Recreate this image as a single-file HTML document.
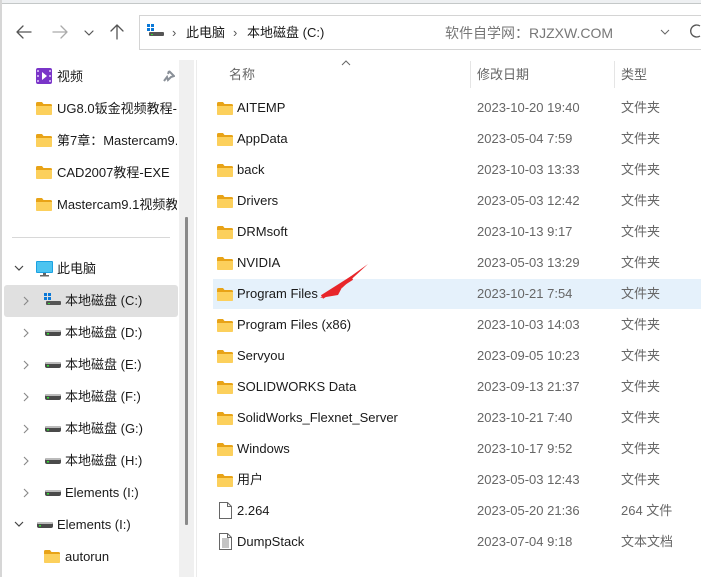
<!DOCTYPE html>
<html><head><meta charset="utf-8">
<style>
*{margin:0;padding:0;box-sizing:border-box}
body{width:701px;height:577px;overflow:hidden;background:#fff;position:relative;font-family:"Liberation Sans","Noto Sans CJK SC",sans-serif;font-size:13px;color:#1a1a1a}
.a{position:absolute;white-space:nowrap}
.fold{position:absolute;width:16px;height:13px}
.t{line-height:16px;margin-top:1px}
.g{color:#666}
</style></head><body>
<div class="a" style="left:0;top:0;width:701px;height:4px;background:#eef0f2;border-bottom:1px solid #c4c8c8"></div>
<div class="a" style="left:0;top:0;width:2px;height:577px;background:#d6d6d6"></div>
<svg class="a" style="left:14px;top:22px" width="120" height="20" viewBox="0 0 120 20" fill="none" stroke-linecap="round" stroke-linejoin="round">
<path d="M3 10H17M3 10L9 4M3 10L9 16" stroke="#555" stroke-width="1.3"/>
<path d="M39 10H53M53 10L47 4M53 10L47 16" stroke="#aaa" stroke-width="1.3"/>
<path d="M71 9L75 13L79 9" stroke="#555" stroke-width="1.2"/>
<path d="M103 3V17M103 3L97 9M103 3L109 9" stroke="#555" stroke-width="1.3"/>
</svg>
<div class="a" style="left:139px;top:15px;width:570px;height:35px;border:1px solid #d4d4d4;border-right:none"></div>
<svg class="a" style="left:147px;top:24px" width="18" height="14"><rect x="0" y="0" width="3" height="3" fill="#0a78d7"/><rect x="4" y="0" width="3" height="3" fill="#0a78d7"/><rect x="0" y="4" width="3" height="3" fill="#0a78d7"/><rect x="4" y="4" width="3" height="3" fill="#0a78d7"/><rect x="2" y="8" width="15" height="4" rx="1" fill="#555"/><rect x="4" y="10" width="2" height="1" fill="#3d3"/></svg>
<div class="a t" style="left:172px;top:24px;color:#555">›</div>
<div class="a t" style="left:186px;top:24px">此电脑</div>
<div class="a t" style="left:233px;top:24px;color:#555">›</div>
<div class="a t" style="left:247px;top:24px">本地磁盘 (C:)</div>
<div class="a t" style="left:445px;top:24px;color:#777;font-size:14px">软件自学网：RJZXW.COM</div>
<svg class="a" style="left:660px;top:28px" width="10" height="8"><path d="M1 2L5 6L9 2" stroke="#666" fill="none" stroke-width="1"/></svg>
<svg class="a" style="left:690px;top:22px" width="11" height="18"><path d="M10 4A6 6 0 1 0 10 14" stroke="#555" fill="none" stroke-width="1.3"/></svg>
<div class="a" style="left:179px;top:60px;width:15px;height:517px;background:#f0f0f0"></div>
<div class="a" style="left:185px;top:217px;width:3px;height:308px;background:#8a8a8a;border-radius:1px"></div>
<div class="a" style="left:196px;top:60px;width:1px;height:517px;background:#ececec"></div>
<svg class="a" style="left:36px;top:68px" width="16" height="16"><rect width="16" height="16" rx="2" fill="#7a35c8"/><rect x="1" y="2" width="2" height="2" fill="#c9a6f0"/><rect x="1" y="7" width="2" height="2" fill="#c9a6f0"/><rect x="1" y="12" width="2" height="2" fill="#c9a6f0"/><rect x="13" y="2" width="2" height="2" fill="#c9a6f0"/><rect x="13" y="7" width="2" height="2" fill="#c9a6f0"/><rect x="13" y="12" width="2" height="2" fill="#c9a6f0"/><path d="M6 4L11 8L6 12Z" fill="#fff"/></svg>
<div class="a t" style="left:57px;top:68px">视频</div>
<svg class="a" style="left:163px;top:70px" width="12" height="12"><path d="M6 1L11 6L8 7L5 10L4 7L1 11M6 1L5 4" stroke="#8a9098" stroke-width="2" fill="none"/></svg>
<div id="qa"></div>
<div class="a" style="left:12px;top:237px;width:158px;height:1px;background:#d8d8d8"></div>
<div class="a" style="left:4px;top:285px;width:174px;height:32px;background:#e0e0e0;border-radius:3px"></div>
<div id="tree"></div>
<svg class="a" style="left:341px;top:59px" width="10" height="7"><path d="M1 6L5 2L9 6" stroke="#666" fill="none"/></svg>
<div class="a t g" style="left:229px;top:66px">名称</div>
<div class="a" style="left:470px;top:61px;width:1px;height:27px;background:#e5e5e5"></div>
<div class="a t g" style="left:477px;top:66px">修改日期</div>
<div class="a" style="left:614px;top:61px;width:1px;height:27px;background:#e5e5e5"></div>
<div class="a t g" style="left:621px;top:66px">类型</div>
<div class="a" style="left:213px;top:279px;width:488px;height:30px;background:#e5f1fb"></div>
<div id="rows"></div>
<svg class="a" style="left:318px;top:262px" width="52" height="40"><path d="M50 2L22 22L24 26Z" fill="#e8262a"/><path d="M2 36L28 18L20 33Z" fill="#e8262a"/><path d="M4 35L34 16" stroke="#e8262a" stroke-width="4"/></svg>
<script>
var F='<svg class="fold" viewBox="0 0 16 13"><path d="M0 1.5Q0 0 1.5 0H6L7.5 2H14.5Q16 2 16 3.5V11.5Q16 13 14.5 13H1.5Q0 13 0 11.5Z" fill="#e8a317"/><path d="M0 4H16V11.5Q16 13 14.5 13H1.5Q0 13 0 11.5Z" fill="#fcd05c"/></svg>';
function D(l,t){return '<svg class="a" style="left:'+l+'px;top:'+t+'px" width="18" height="8"><rect x="1" y="1" width="16" height="6" rx="2" fill="#4a4a4a"/><rect x="1" y="1" width="16" height="2" rx="1" fill="#bbb"/><rect x="3" y="4" width="2" height="1.5" fill="#3d3"/></svg>';}
var h='',q=['UG8.0钣金视频教程-EXE','第7章：Mastercam9.1','CAD2007教程-EXE','Mastercam9.1视频教程'];
q.forEach(function(s,i){var y=100+i*32;h+='<div class="a" style="left:36px;top:'+(y+2)+'px">'+F+'</div><div class="a t" style="left:57px;top:'+y+'px;width:120px;overflow:hidden">'+s+'</div>';});
document.getElementById('qa').innerHTML=h;
h='<svg class="a" style="left:14px;top:265px" width="10" height="7"><path d="M1 1L5 5L9 1" stroke="#444" fill="none" stroke-width="1.2"/></svg>';
h+='<svg class="a" style="left:36px;top:261px" width="17" height="16"><rect x="0" y="0" width="17" height="12" rx="1" fill="#1ba1e2"/><rect x="1" y="1" width="15" height="10" fill="#4cc4f0"/><rect x="7" y="12" width="3" height="2" fill="#666"/><rect x="4" y="14" width="9" height="1.5" fill="#666"/></svg><div class="a t" style="left:57px;top:260px">此电脑</div>';
var d=['C','D','E','F','G','H'];
d.forEach(function(c,i){var y=292+i*32;h+='<svg class="a" style="left:23px;top:'+(y+4)+'px" width="7" height="10"><path d="M1 1L5 5L1 9" stroke="#888" fill="none" stroke-width="1.1"/></svg>';
if(i==0)h+='<svg class="a" style="left:44px;top:'+(y+1)+'px" width="18" height="14"><rect x="0" y="0" width="3" height="3" fill="#0a78d7"/><rect x="4" y="0" width="3" height="3" fill="#0a78d7"/><rect x="0" y="4" width="3" height="3" fill="#0a78d7"/><rect x="4" y="4" width="3" height="3" fill="#0a78d7"/><rect x="2" y="8" width="15" height="4" rx="1" fill="#555"/><rect x="4" y="10" width="2" height="1" fill="#3d3"/></svg>';
else h+=D(44,y+5);
h+='<div class="a t" style="left:65px;top:'+y+'px">本地磁盘 ('+c+':)</div>';});
h+='<svg class="a" style="left:23px;top:488px" width="7" height="10"><path d="M1 1L5 5L1 9" stroke="#888" fill="none" stroke-width="1.1"/></svg>'+D(44,489)+'<div class="a t" style="left:65px;top:484px">Elements (I:)</div>';
h+='<svg class="a" style="left:14px;top:521px" width="10" height="7"><path d="M1 1L5 5L9 1" stroke="#444" fill="none" stroke-width="1.2"/></svg>'+D(36,521)+'<div class="a t" style="left:57px;top:516px">Elements (I:)</div>';
h+='<div class="a" style="left:44px;top:550px">'+F+'</div><div class="a t" style="left:65px;top:548px">autorun</div>';
document.getElementById('tree').innerHTML=h;
var r=[['AITEMP','2023-10-20 19:40','文件夹'],['AppData','2023-05-04 7:59','文件夹'],['back','2023-10-03 13:33','文件夹'],['Drivers','2023-05-03 12:42','文件夹'],['DRMsoft','2023-10-13 9:17','文件夹'],['NVIDIA','2023-05-03 13:29','文件夹'],['Program Files','2023-10-21 7:54','文件夹'],['Program Files (x86)','2023-10-03 14:03','文件夹'],['Servyou','2023-09-05 10:23','文件夹'],['SOLIDWORKS Data','2023-09-13 21:37','文件夹'],['SolidWorks_Flexnet_Server','2023-10-21 7:40','文件夹'],['Windows','2023-10-17 9:52','文件夹'],['用户','2023-05-03 12:43','文件夹'],['2.264','2023-05-20 21:36','264 文件'],['DumpStack','2023-07-04 9:18','文本文档']];
h='';r.forEach(function(x,i){var y=99+i*31;
if(i<13)h+='<div class="a" style="left:217px;top:'+(y+3)+'px">'+F+'</div>';
else h+='<svg class="a" style="left:219px;top:'+(y)+'px" width="13" height="17"><path d="M0.5 0.5H8.5L12.5 4.5V16.5H0.5Z" fill="#fff" stroke="#666"/><path d="M8.5 0.5V4.5H12.5" fill="none" stroke="#666"/>'+(i==14?'<path d="M3 6H10M3 8H10M3 10H10M3 12H10M3 14H10" stroke="#888"/>':'')+'</svg>';
h+='<div class="a t" style="left:237px;top:'+y+'px">'+x[0]+'</div><div class="a t g" style="left:477px;top:'+y+'px">'+x[1]+'</div><div class="a t g" style="left:621px;top:'+y+'px">'+x[2]+'</div>';});
document.getElementById('rows').innerHTML=h;
</script>
</body></html>
